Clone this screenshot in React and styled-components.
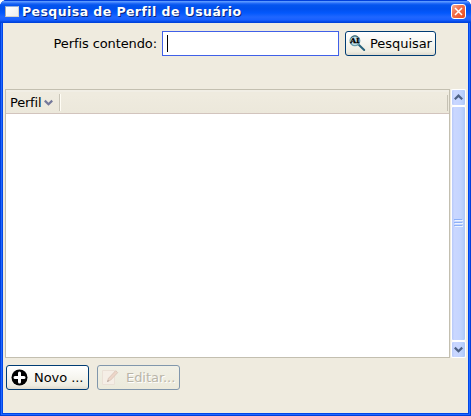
import React from 'react';
import styled, { createGlobalStyle } from 'styled-components';

const GlobalStyle = createGlobalStyle`
  * { box-sizing: border-box; }
  body { margin: 0; background: #fff; overflow: hidden; }
`;

const Window = styled.main`
  width: 471px;
  height: 416px;
  display: flex;
  flex-direction: column;
  overflow: hidden;
  border-radius: 7px 7px 0 0;
  background: #0046e8;
  box-shadow: inset 0 0 0 1px #0040dc, inset 0 0 0 2px #2068ff;
  font: 13px/16px "DejaVu Sans", sans-serif;
  color: #000;
`;

const TitleBar = styled.header`
  flex: 0 0 23px;
  display: flex;
  align-items: center;
  padding: 0 5px;
  background: linear-gradient(#0040dc 0, #0040dc 1px, #5a9aff 1px, #5795ff 2px, #2a70fa 3px, #0455ee 5px, #0050ee 9px, #0358fc 13px, #1f66ff 17px, #175fff 20px, #0046e0 22px, #0040d8 23px);
`;

const WindowIcon = styled.span`
  width: 14px;
  height: 11px;
  border: 1px solid #d7d3c8;
  border-top-color: #8facdf;
  border-left-color: #aaa;
  background: linear-gradient(135deg, #fff, #eee);
`;

const Title = styled.h1`
  flex: 1;
  margin: 0 0 0 3px;
  font: bold 12.5px/16px "DejaVu Sans", sans-serif;
  letter-spacing: 0.43px;
  color: #fff;
  text-shadow: 1px 1px 0 #06257c;
  white-space: nowrap;
`;

const CloseButton = styled.button`
  width: 15px;
  height: 15px;
  margin: 0;
  padding: 0;
  display: flex;
  align-items: center;
  justify-content: center;
  border: 1px solid #fff;
  border-radius: 3px;
  background: linear-gradient(135deg, #f5ac92, #f0704c 40%, #e8491e);
`;

const Content = styled.section`
  flex: 1;
  margin: 0 3px 3px;
  display: flex;
  flex-direction: column;
  background: #efebdf;
`;

const SearchRow = styled.div`
  height: 25px;
  margin-top: 8px;
  display: flex;
  align-items: center;
`;

const Label = styled.label`
  width: 154px;
  margin-right: 5px;
  text-align: right;
  letter-spacing: -0.1px;
  white-space: nowrap;
`;

const Field = styled.div`
  width: 177px;
  height: 25px;
  margin-right: 6px;
  padding: 3px 4px;
  border: 1px solid #4060e8;
  background: #fff;
`;

const Caret = styled.span`
  display: block;
  width: 1px;
  height: 17px;
  background: #000;
`;

const Button = styled.button`
  width: ${({ $width }) => $width}px;
  height: 25px;
  margin: 0;
  padding: 0 0 0 ${({ $inset = 4 }) => $inset}px;
  display: flex;
  align-items: center;
  gap: ${({ $gap }) => $gap}px;
  border: 1px solid ${({ disabled }) => (disabled ? '#8197ac' : '#003c74')};
  border-radius: 3px;
  background: ${({ disabled }) => (disabled
    ? 'linear-gradient(#f1f0e6, #eceadb)'
    : 'linear-gradient(#fff, #f6f5ef 50%, #eeece1 85%, #dedacf)')};
  color: ${({ disabled }) => (disabled ? '#b9b5a8' : '#000')};
  text-shadow: ${({ disabled }) => (disabled ? '1px 1px 0 #fff' : 'none')};
  font: inherit;
  letter-spacing: -0.05px;
  white-space: nowrap;
  svg { flex: none; }
`;

const TableArea = styled.div`
  height: 269px;
  margin: 33px 2px 0;
  display: flex;
`;

const Table = styled.div`
  width: 445px;
  display: flex;
  flex-direction: column;
  border: 1px solid #c3bfb0;
  background: #fff;
`;

const TableHeader = styled.div`
  height: 24px;
  display: flex;
  align-items: center;
  justify-content: space-between;
  padding-right: 1px;
  background: linear-gradient(#efebdf, #efebdf 3px, #ece8db);
  border-top: 2px solid #f1eee5;
  border-bottom: 1px solid #d2c4bd;
`;

const Column = styled.div`
  width: 54px;
  height: 17px;
  display: flex;
  align-items: center;
  padding-left: 4px;
  gap: 3px;
  letter-spacing: -0.2px;
  border-right: 1px solid #c9c5b8;
  box-shadow: 1px 0 #fffdf5;
`;

const HeaderEnd = styled.span`
  width: 1px;
  height: 16px;
  background: #c5c1b4;
`;

const ScrollBar = styled.div`
  width: 15px;
  margin-left: 1px;
  display: flex;
  flex-direction: column;
  background: #f7f6f1;
`;

const ScrollPiece = styled.div`
  flex: ${({ $grow }) => ($grow ? '1' : '0 0 17px')};
  display: flex;
  align-items: center;
  justify-content: center;
  border: 1px solid #fff;
  border-radius: 2px;
  background: linear-gradient(90deg, #b8cafa, #cad7ff 18%, #c5d5ff 60%, #b6cffb 85%, #aec6f7);
`;

const Actions = styled.div`
  display: flex;
  gap: 8px;
  margin: 7px 0 0 3px;
`;

function SearchIcon() {
  return (
    <svg width="17" height="17" viewBox="0 0 17 17">
      <path d="M10 10l5.2 5" stroke="#27627c" strokeWidth="2" strokeLinecap="round" />
      <circle cx="5.9" cy="5.8" r="4.9" fill="#c5e4ee" stroke="#6a9dac" strokeWidth="1.2" />
      <path d="M1.8 3a5 5 0 0 1 7-1.2" fill="none" stroke="#32606f" />
      <text x="1.2" y="8.4" fontFamily="DejaVu Serif, serif" fontWeight="bold" fontSize="7" stroke="#000" strokeWidth=".3" textLength="9.2" lengthAdjust="spacingAndGlyphs">AI</text>
    </svg>
  );
}

function PlusIcon() {
  return (
    <svg width="17" height="17" viewBox="0 0 17 17">
      <circle cx="8.5" cy="8.5" r="8" fill="#000" />
      <path d="M8.5 4v9M4 8.5h9" stroke="#fff" strokeWidth="3" strokeLinecap="round" />
    </svg>
  );
}

function EditIcon() {
  return (
    <svg width="17" height="17" viewBox="0 0 17 17">
      <path d="M.5 1.5h12v14H.5z" fill="#f5eee6" stroke="#eae0d6" />
      <path d="M5.5 12.5l1-3.2 7.2-7.6 2 1.9-7.1 7.5z" fill="#edd5c8" stroke="#dcc8bb" />
      <path d="M5 13l1-2 1 1z" fill="#a89c94" />
    </svg>
  );
}

function Chevron({ up, color = '#4d6185', width = 9 }) {
  return (
    <svg width={width} height="7" viewBox="0 0 9 7">
      <path d={up ? 'M.8 5.2L4.5 1.6l3.7 3.6' : 'M.8 1.6l3.7 3.6 3.7-3.6'} fill="none" stroke={color} strokeWidth="2.2" />
    </svg>
  );
}

function Grip() {
  return (
    <svg width="9" height="9" viewBox="0 0 9 9" shapeRendering="crispEdges">
      <path d="M1 1.5h8M1 4.5h8M1 7.5h8" stroke="#eef4fe" />
      <path d="M0 .5h8M0 3.5h8M0 6.5h8" stroke="#8cb0f8" />
    </svg>
  );
}

export default function App() {
  return (
    <>
      <GlobalStyle />
      <Window>
        <TitleBar>
          <WindowIcon />
          <Title>Pesquisa de Perfil de Usuário</Title>
          <CloseButton aria-label="Fechar">
            <svg width="9" height="9" viewBox="0 0 9 9"><path d="M1 1l7 7M8 1L1 8" stroke="#fff" strokeWidth="1.5" /></svg>
          </CloseButton>
        </TitleBar>
        <Content>
          <SearchRow>
            <Label>Perfis contendo:</Label>
            <Field><Caret /></Field>
            <Button $width={91} $gap={4} $inset={3}><SearchIcon />Pesquisar</Button>
          </SearchRow>
          <TableArea>
            <Table>
              <TableHeader>
                <Column>Perfil<Chevron color="#74789a" /></Column>
                <HeaderEnd />
              </TableHeader>
            </Table>
            <ScrollBar>
              <ScrollPiece><Chevron up /></ScrollPiece>
              <ScrollPiece $grow><Grip /></ScrollPiece>
              <ScrollPiece><Chevron /></ScrollPiece>
            </ScrollBar>
          </TableArea>
          <Actions>
            <Button $width={83} $gap={6}><PlusIcon />Novo ...</Button>
            <Button $width={83} $gap={7} disabled><EditIcon />Editar...</Button>
          </Actions>
        </Content>
      </Window>
    </>
  );
}
